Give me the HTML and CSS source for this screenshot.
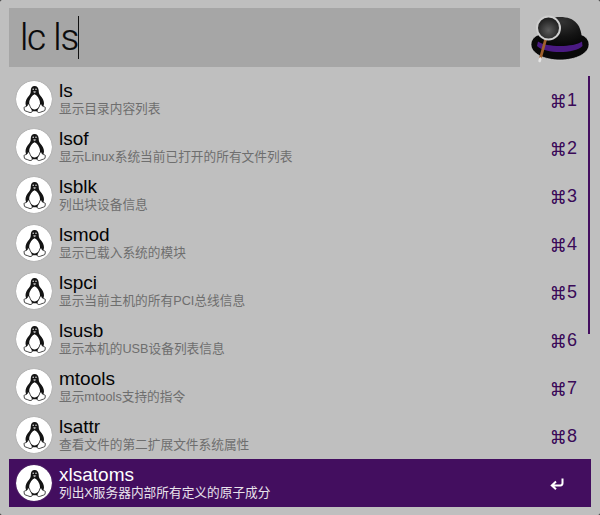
FILE: index.html
```html
<!DOCTYPE html>
<html lang="zh">
<head>
<meta charset="utf-8">
<title>Alfred</title>
<link rel="stylesheet" href="styles.css">
</head>
<body>
<svg class="defs" width="0" height="0" aria-hidden="true">
  <defs>
    <symbol id="tux" viewBox="0 0 36 36">
      <circle cx="18" cy="18" r="18" fill="#fff"/>
      <path d="M18.600 5c-2.500 0-3.800 2-3.800 4.500 0 2.600-.5 3.700-2 5.600-1.600 2-3.300 4.400-3.300 7.200 0 2.800 1.500 5 3.500 6.200l3 1.700h5.500l3-1.700c2-1.200 3.500-3.400 3.500-6.200 0-2.800-1.700-5.200-3.300-7.200-1.500-1.900-2-3-2-5.600C22.500 7 21.100 5 18.600 5z" fill="#141414"/>
      <path d="M18.600 13.200c-2 .6-5.400 4.600-5.400 9 0 3.400 2 5.800 5.400 6.300 3.400-.5 5.400-2.900 5.400-6.300 0-4.400-3.400-8.400-5.400-9z" fill="#fff"/>
      <path d="M16.800 10.700l1.800-.8 1.800.8-1.800 1.500z" fill="#aaa"/>
      <circle cx="17.200" cy="8.300" r=".7" fill="#fff"/><circle cx="20" cy="8.300" r=".7" fill="#fff"/>
      <path d="M12.300 22.900c-.9.100-.7 1.700-1.400 2.200-.8.600-2.900.7-2.900 1.600 0 .9.500 1.500.4 2.400-.1.900 2.400 1.100 4.500 2.100 1.500.7 3.300.3 3.400-1 .1-1.600-1.400-2.900-2.100-4.500-.5-1.300-.9-2.900-1.900-2.800z" fill="#fff" stroke="#141414" stroke-width=".8"/>
      <path d="M25.100 22.900c.9.100.7 1.700 1.400 2.200.8.600 2.900.7 2.900 1.600 0 .9-.5 1.500-.4 2.400.1.900-2.400 1.100-4.500 2.100-1.500.7-3.300.3-3.400-1-.1-1.600 1.400-2.900 2.100-4.500.5-1.300.9-2.900 1.900-2.800z" fill="#fff" stroke="#141414" stroke-width=".8"/>
    </symbol>
  </defs>
</svg>
<main class="window">
  <header class="top">
    <div class="search"><span class="query">lc ls</span><span class="caret"></span></div>
    <svg class="hat" viewBox="0 0 60 60" aria-hidden="true">
      <defs>
        <radialGradient id="crown" cx="55%" cy="15%" r="80%">
          <stop offset="0" stop-color="#333"/><stop offset=".6" stop-color="#141414"/><stop offset="1" stop-color="#060606"/>
        </radialGradient>
        <radialGradient id="lens" cx="50%" cy="60%" r="60%">
          <stop offset="0" stop-color="#5c5c5c"/><stop offset="1" stop-color="#161616"/>
        </radialGradient>
      </defs>
      <path d="M1 36.500C1 32 4 28.500 8 27L52 27c4 1.500 7 5 7 9.500 0 9-13 15.500-29 15.500S1 45.500 1 36.500z" fill="#090909" stroke="#d4d4d4" stroke-opacity=".7"/>
      <path d="M8 34C8 17 15 9 30 9s22 8 22 25c-8 8-36 8-44 0z" fill="url(#crown)"/>
      <path d="M8 33.500c8 6 36 6 44 0l.5 4.500c-8 8-37 8-45.500 0z" fill="#4a1a82"/>
      <path d="M16 30L10.500 50" stroke="#a0602c" stroke-width="2.800" stroke-linecap="round"/>
      <path d="M10.400 50.500L9.600 53" stroke="#e4e4e4" stroke-width="2.600" stroke-linecap="round"/>
      <circle cx="18.500" cy="20" r="11.500" fill="url(#lens)" stroke="#cfcfcf" stroke-width="2"/>
    </svg>
  </header>
  <ul class="list">
    <li class="row"><svg class="icon"><use href="#tux"/></svg><div class="text"><div class="name">ls</div><div class="desc">显示目录内容列表</div></div><span class="key"><span class="cmd">⌘</span>1</span></li>
    <li class="row"><svg class="icon"><use href="#tux"/></svg><div class="text"><div class="name">lsof</div><div class="desc">显示Linux系统当前已打开的所有文件列表</div></div><span class="key"><span class="cmd">⌘</span>2</span></li>
    <li class="row"><svg class="icon"><use href="#tux"/></svg><div class="text"><div class="name">lsblk</div><div class="desc">列出块设备信息</div></div><span class="key"><span class="cmd">⌘</span>3</span></li>
    <li class="row"><svg class="icon"><use href="#tux"/></svg><div class="text"><div class="name">lsmod</div><div class="desc">显示已载入系统的模块</div></div><span class="key"><span class="cmd">⌘</span>4</span></li>
    <li class="row"><svg class="icon"><use href="#tux"/></svg><div class="text"><div class="name">lspci</div><div class="desc">显示当前主机的所有PCI总线信息</div></div><span class="key"><span class="cmd">⌘</span>5</span></li>
    <li class="row"><svg class="icon"><use href="#tux"/></svg><div class="text"><div class="name">lsusb</div><div class="desc">显示本机的USB设备列表信息</div></div><span class="key"><span class="cmd">⌘</span>6</span></li>
    <li class="row"><svg class="icon"><use href="#tux"/></svg><div class="text"><div class="name">mtools</div><div class="desc">显示mtools支持的指令</div></div><span class="key"><span class="cmd">⌘</span>7</span></li>
    <li class="row"><svg class="icon"><use href="#tux"/></svg><div class="text"><div class="name">lsattr</div><div class="desc">查看文件的第二扩展文件系统属性</div></div><span class="key"><span class="cmd">⌘</span>8</span></li>
    <li class="row selected"><svg class="icon"><use href="#tux"/></svg><div class="text"><div class="name">xlsatoms</div><div class="desc">列出X服务器内部所有定义的原子成分</div></div>
      <svg class="enter" viewBox="0 0 16 14" aria-hidden="true"><path d="M13.500 1.500v4.800c0 1.300-.8 2.100-2.100 2.100H3.500M7 4.500L2.800 8.400 7 12.300" fill="none" stroke="#fff" stroke-width="2"/></svg>
    </li>
  </ul>
  <div class="scrollbar"></div>
</main>
</body>
</html>
```
FILE: styles.css
```css
* { box-sizing: border-box; }
html, body { margin: 0; padding: 0; }
body { width: 600px; height: 515px; overflow: hidden; background: #222; font-family: "Liberation Sans", "Noto Sans CJK SC", sans-serif; }
.defs { position: absolute; }
.window { position: relative; width: 600px; height: 515px; padding: 8px 9px 0; background: #bfbfbf; border-radius: 2px; }
.top { display: flex; justify-content: space-between; height: 60px; }
.search { width: 511px; height: 59px; background: #a6a6a6; padding: 8px 0 0 11px; display: flex; align-items: flex-start; }
.query { font-family: Roboto, "Liberation Sans", sans-serif; font-weight: 300; font-size: 37px; line-height: 44px; letter-spacing: -1.2px; word-spacing: .5px; color: #0a0a0a; -webkit-text-stroke: .2px #0a0a0a; }
.caret { width: 1px; height: 43px; background: #111; }
.hat { width: 60px; height: 60px; margin-right: 1px; }
.list { list-style: none; margin: 7px 0 0; padding: 0; }
.row { display: flex; align-items: center; height: 48px; padding: 0 14px 0 7px; }
.icon { width: 36px; height: 36px; flex: none; border-radius: 50%; box-shadow: 0 0 1px #888; }
.text { flex: 1; margin-left: 7px; min-width: 0; }
.name { font-size: 19px; line-height: 20px; color: #050505; }
.desc { font-size: 12.7px; line-height: 15px; margin-top: 1px; color: #6e6e6e; }
.key { font-size: 18px; line-height: 20px; color: #3a0a58; width: 32px; text-align: right; padding-top: 3px; }
.cmd { font-size: 13.500px; margin-right: 2px; -webkit-text-stroke: .7px #3a0a58; }
.selected { background: #430e5f; }
.selected .name { color: #fff; }
.selected .desc { color: #e9e3ec; }
.enter { width: 16px; height: 14px; margin-right: 12px; margin-top: 1px; }
.scrollbar { position: absolute; left: 588px; top: 76px; width: 2px; height: 258px; background: #430e5f; }
```
